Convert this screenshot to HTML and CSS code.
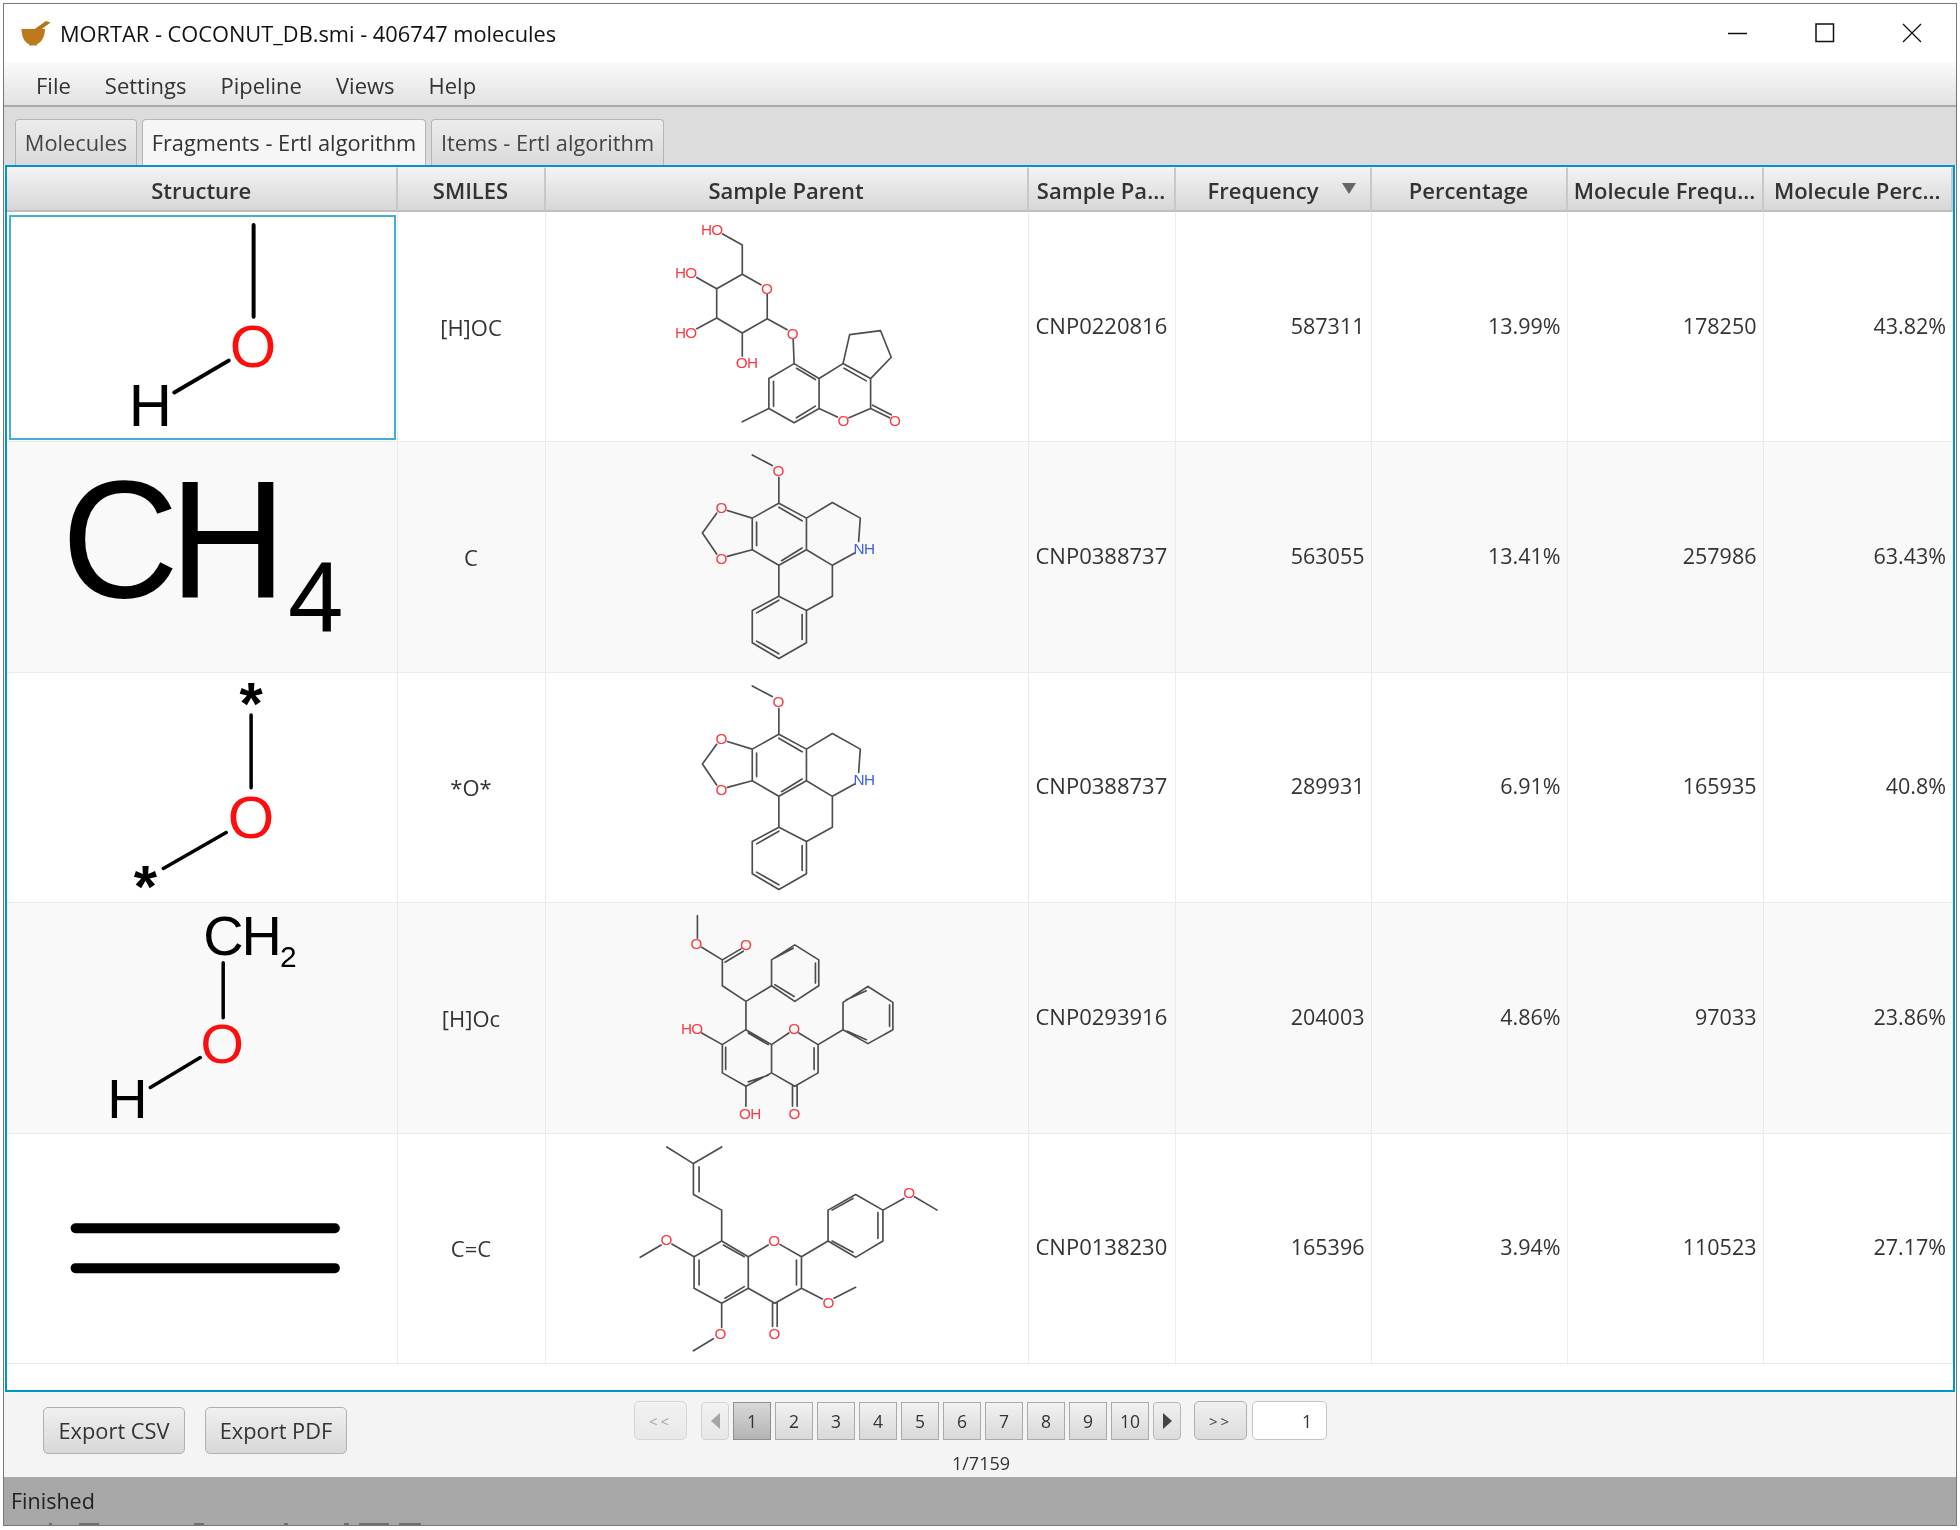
FILE: index.html
```html
<!DOCTYPE html>
<html lang="en">
<head>
<meta charset="utf-8">
<title>MORTAR</title>
<link rel="stylesheet" href="styles.css">
</head>
<body>
<div class="window">
  <header class="titlebar">
    <svg class="appicon" width="30" height="26" viewBox="0 0 30 26"><path d="M0.500 9 H24 C24 17 20 23 16 24 L16 25.500 H8 V24 C4 23 0.500 17 0.500 9Z" fill="#bd7a1c"/><path d="M13 9.500 L25 1 L29.500 2.500 L20 9.500Z" fill="#b3741a"/></svg>
    <span class="apptitle">MORTAR - COCONUT_DB.smi - 406747 molecules</span>
    <div class="winbtns">
      <svg width="20" height="20" viewBox="0 0 20 20"><path d="M0 10.500H19" stroke="#111" stroke-width="1.500"/></svg>
      <svg width="20" height="20" viewBox="0 0 20 20"><rect x="1" y="1" width="17.500" height="17.500" fill="none" stroke="#111" stroke-width="1.500"/></svg>
      <svg width="20" height="20" viewBox="0 0 20 20"><path d="M1 1L19 19M19 1L1 19" stroke="#111" stroke-width="1.300"/></svg>
    </div>
  </header>
  <nav class="menubar"><span>File</span><span>Settings</span><span>Pipeline</span><span>Views</span><span>Help</span></nav>
  <div class="tabbar">
    <div class="tab t1">Molecules</div>
    <div class="tab tab-on t2">Fragments - Ertl algorithm</div>
    <div class="tab t3">Items - Ertl algorithm</div>
  </div>
  <main class="tableframe">
    <div class="row head">
      <div class="th">Structure</div><div class="th">SMILES</div><div class="th">Sample Parent</div><div class="th">Sample Pa...</div>
      <div class="th freq"><span>Frequency</span><i class="sort"></i></div><div class="th">Percentage</div><div class="th">Molecule Frequ...</div><div class="th">Molecule Perc...</div>
    </div>

    <div class="row body">
      <div class="td pic selected">
        <svg class="mol" viewBox="7 212 389 230">
          <path class="b4" d="M253.500 225V317M174 393L228.500 361"/>
          <text class="red" x="253" y="367" font-size="60" text-anchor="middle">O</text>
          <text x="150" y="427" font-size="60" text-anchor="middle">H</text>
        </svg>
      </div>
      <div class="td smi">[H]OC</div>
      <div class="td pic">
        <svg class="mol thin" viewBox="-228 6 1449 690">
          <path class="bz" d="M303 72L362 105V193L418 225M437 254V327L362 370L285 325V237L362 193M285 237L225 203M285 325L225 357M362 370V440M437 327L497 360M515 388L518 462L593 507V597L518 640L442 597V507L518 462M525 476L582 510M582 590L525 625M456 515V590M593 507L665 462L748 507V597L683 625M648 623L593 597M668 476L735 514M665 462L685 375L778 363L810 443L748 507M748 597L805 625M754 587L810 616M442 597L362 637"/>
          <text class="lab" x="270" y="74">HO</text><text class="lab" x="192" y="206">HO</text><text class="lab" x="435" y="253">O</text><text class="lab" x="192" y="384">HO</text><text class="lab" x="375" y="474">OH</text><text class="lab" x="513" y="387">O</text><text class="lab" x="665" y="651">O</text><text class="lab" x="820" y="651">O</text>
        </svg>
      </div>
      <div class="td id">CNP0220816</div><div class="td num">587311</div><div class="td num">13.99%</div><div class="td num">178250</div><div class="td num">43.82%</div>
    </div>

    <div class="row body alt">
      <div class="td pic">
        <svg class="mol" viewBox="7 442 389 230">
          <text class="ch4" transform="translate(61 597.500) scale(.97 1)">CH</text>
          <text class="ch4sub" x="288" y="632.500">4</text>
        </svg>
      </div>
      <div class="td smi">C</div>
      <div class="td pic">
        <svg class="mol thin" viewBox="-348 -9 1449 690">
          <path class="bz" d="M272 30L332 62M352 97V175L435 220V315L352 362L272 315V220L352 175M352 187L422 228M285 232V303M422 310L360 348M197 197L272 220M197 335L272 315M165 205L122 265L165 328M435 220L513 173L597 220L592 290M580 325L513 362L435 315M513 362V455L435 498M352 362V455L435 498V595L352 642L272 595V498L352 455M352 467L285 505M285 590L352 628M422 510V585"/>
          <text class="lab" x="350" y="94">O</text><text class="lab" x="178" y="206">O</text><text class="lab" x="178" y="359">O</text><text class="lab blue" x="608" y="328">NH</text>
        </svg>
      </div>
      <div class="td id">CNP0388737</div><div class="td num">563055</div><div class="td num">13.41%</div><div class="td num">257986</div><div class="td num">63.43%</div>
    </div>

    <div class="row body">
      <div class="td pic">
        <svg class="mol" viewBox="7 673 389 230">
          <path class="b3" d="M251 715V788M163 869L226 833"/>
          <text class="star" x="251" y="724" text-anchor="middle">*</text>
          <text class="star" x="145" y="908" text-anchor="middle">*</text>
          <text class="red" x="251" y="838" font-size="60" text-anchor="middle">O</text>
        </svg>
      </div>
      <div class="td smi">*O*</div>
      <div class="td pic">
        <svg class="mol thin" viewBox="-348 -9 1449 690">
          <path class="bz" d="M272 30L332 62M352 97V175L435 220V315L352 362L272 315V220L352 175M352 187L422 228M285 232V303M422 310L360 348M197 197L272 220M197 335L272 315M165 205L122 265L165 328M435 220L513 173L597 220L592 290M580 325L513 362L435 315M513 362V455L435 498M352 362V455L435 498V595L352 642L272 595V498L352 455M352 467L285 505M285 590L352 628M422 510V585"/>
          <text class="lab" x="350" y="94">O</text><text class="lab" x="178" y="206">O</text><text class="lab" x="178" y="359">O</text><text class="lab blue" x="608" y="328">NH</text>
        </svg>
      </div>
      <div class="td id">CNP0388737</div><div class="td num">289931</div><div class="td num">6.91%</div><div class="td num">165935</div><div class="td num">40.8%</div>
    </div>

    <div class="row body alt">
      <div class="td pic">
        <svg class="mol" viewBox="7 903 389 230">
          <path class="b3" d="M223 963V1018M150 1088L200 1058"/>
          <text class="ch2" x="203" y="955" font-size="56">CH</text>
          <text x="280" y="967" font-size="30">2</text>
          <text class="red" x="222" y="1063" font-size="56" text-anchor="middle">O</text>
          <text x="127" y="1119" font-size="56" text-anchor="middle">H</text>
        </svg>
      </div>
      <div class="td smi">[H]Oc</div>
      <div class="td pic">
        <svg class="mol thin" viewBox="-288 -6 1449 690">
          <path class="bz" d="M167 32V100M180 127L242 165L298 132M250 172L305 139M242 165V243L313 290L390 243V165L460 120L532 165V243L460 290L390 243M398 160L455 130M522 175V235M400 240L458 275M313 290V375L390 420V505L313 545L242 505V420L313 375M180 385L242 420M320 385L380 420M390 420L442 385M472 385L530 420V505L460 545L390 505M518 430V495M453 545V605M467 545V605M380 512L320 532M252 428V495M313 545V605M530 420L605 375V293L680 245L755 293V375L680 417L605 375M615 285L675 258M745 300V365M618 380L675 405"/>
          <text class="lab" x="163" y="133">O</text><text class="lab" x="312" y="134">O</text><text class="lab" x="150" y="388">HO</text><text class="lab" x="457" y="389">O</text><text class="lab" x="458" y="643">O</text><text class="lab" x="325" y="643">OH</text>
        </svg>
      </div>
      <div class="td id">CNP0293916</div><div class="td num">204003</div><div class="td num">4.86%</div><div class="td num">97033</div><div class="td num">23.86%</div>
    </div>

    <div class="row body">
      <div class="td pic">
        <svg class="mol" viewBox="7 1134 389 230">
          <path class="b10" d="M75 1228.500H335M75 1268.500H335"/>
        </svg>
      </div>
      <div class="td smi">C=C</div>
      <div class="td pic">
        <svg class="mol thin" viewBox="-198 -4 1449 690">
          <path class="bz" d="M165 35L245 85L330 35M245 85V178L330 225V318L410 365V460L330 505L247 460V365L330 318M262 95V170M335 330L398 365M410 365L470 330M505 328L570 365V460L490 505L410 460M555 375V450M398 455L340 490M262 375V450M247 365L180 327M148 330L85 367M330 505V578M305 612L245 648M483 505V575M497 505V575M570 460L633 492M668 490L733 457M570 365L650 318V225L733 178L815 225V318L733 367L650 318M662 225L725 190M800 232V310M662 318L725 352M815 225L878 190M910 185L978 225"/>
          <text class="lab" x="487" y="333">O</text><text class="lab" x="163" y="331">O</text><text class="lab" x="325" y="613">O</text><text class="lab" x="488" y="613">O</text><text class="lab" x="650" y="518">O</text><text class="lab" x="893" y="188">O</text>
        </svg>
      </div>
      <div class="td id">CNP0138230</div><div class="td num">165396</div><div class="td num">3.94%</div><div class="td num">110523</div><div class="td num">27.17%</div>
    </div>
  </main>
  <section class="bottom">
    <div class="exports"><button class="btn">Export CSV</button><button class="btn">Export PDF</button></div>
    <div class="pager-wrap">
      <div class="pager">
        <button class="nav nav-off">&lt;&lt;</button>
        <div class="pages">
          <button class="arrow arrow-off"><i class="tri-l"></i></button>
          <button class="pg pg-on">1</button><button class="pg">2</button><button class="pg">3</button><button class="pg">4</button><button class="pg">5</button><button class="pg">6</button><button class="pg">7</button><button class="pg">8</button><button class="pg">9</button><button class="pg">10</button>
          <button class="arrow"><i class="tri-r"></i></button>
        </div>
        <button class="nav">&gt;&gt;</button>
        <div class="pageinput">1</div>
      </div>
      <div class="count">1/7159</div>
    </div>
  </section>
  <footer class="status">
    <span>Finished</span>
    <svg class="cliptext" width="500" height="2" viewBox="0 0 500 2"><path d="M45 1h3M75 1h20M190 1h10M280 1h4M340 1h5M355 1h30M395 1h22" stroke="#5c5c5c" stroke-width="1.500"/></svg>
  </footer>
</div>
</body>
</html>
```
FILE: styles.css
```css
* { box-sizing: border-box; }
html, body { margin: 0; padding: 0; background: #fff; }
body {
  width: 1960px;
  height: 1530px;
  padding: 3px 3px 4px 3px;
  font-family: "Open Sans", "Noto Sans", sans-serif;
  color: #333;
}
.window {
  height: 100%;
  display: flex;
  flex-direction: column;
  border: 1.5px solid #777;
  border-bottom-width: 1px;
  background: #f4f4f4;
  filter: blur(0.4px);
}
.titlebar {
  flex: 0 0 58px;
  background: #fff;
  display: flex;
  align-items: center;
  padding-left: 17px;
  color: #111;
}
.appicon { margin-right: 9px; }
.apptitle { font-size: 21.800px; }
.winbtns { margin-left: auto; display: flex; gap: 67px; padding-right: 34px; }
.menubar {
  flex: 0 0 45px;
  display: flex;
  align-items: center;
  gap: 34px;
  padding: 3px 0 0 32px;
  font-size: 22px;
  color: #333;
  background: linear-gradient(#fafafa, #e2e2e2);
  border-bottom: 2px solid #aaa;
}
.tabbar {
  flex: 0 0 58px;
  background: #dcdcdc;
  display: flex;
  align-items: flex-end;
  padding-left: 11px;
  gap: 5px;
}
.tab {
  height: 46px;
  display: flex;
  align-items: center;
  justify-content: center;
  font-size: 21.800px;
  color: #444;
  background: linear-gradient(#ececec, #dadada);
  border: 1px solid #b5b5b5;
  border-bottom: 0;
  border-radius: 4px 4px 0 0;
}
.t1 { width: 122px; }
.t2 { width: 284px; }
.t3 { width: 233px; }
.tab-on { background: #f6f6f6; color: #333; }
.tableframe {
  flex: 0 0 1227px;
  margin: 0 1px;
  border: 2px solid #0096c9;
  border-bottom-width: 2.500px;
  background: #fff;
  display: flex;
  flex-direction: column;
}
.row {
  display: grid;
  grid-template-columns: 390.500px 148px 483px 147px 196px 196px 196px 1fr;
  grid-template-rows: minmax(0, 1fr);
  min-height: 0;
}
.head { flex: 0 0 45px; }
.body { flex: 0 0 230.400px; height: 230.400px; }
.alt { background: #f9f9f9; }
.th {
  display: flex;
  align-items: center;
  justify-content: center;
  padding-top: 2px;
  font-size: 22px;
  font-weight: 600;
  color: #333;
  white-space: nowrap;
  overflow: hidden;
  background: linear-gradient(#f3f3f3, #d7d7d7);
  border-right: 2px solid #c8c8c8;
  border-bottom: 2px solid #bdbdbd;
  border-top: 1px solid #fafafa;
}
.freq { justify-content: flex-start; padding-left: 32px; gap: 24px; }
.sort {
  width: 0;
  height: 0;
  border-left: 7px solid transparent;
  border-right: 7px solid transparent;
  border-top: 11px solid #666;
  margin-top: -4px;
}
.td {
  display: flex;
  align-items: center;
  font-size: 21.500px;
  color: #333;
  border-right: 1.500px solid #ebebeb;
  border-bottom: 1.500px solid #ebebeb;
  min-width: 0;
  min-height: 0;
  padding-bottom: 3px;
  white-space: nowrap;
}
.pic { padding: 0; position: relative; }
.mol { display: block; width: 100%; height: 100%; overflow: visible; font-family: "Liberation Sans", Arial, sans-serif; fill: #000; }
.selected::after {
  content: "";
  position: absolute;
  inset: 3px 1px 1px 2px;
  border: 2px solid #45aed6;
  pointer-events: none;
}
.smi { justify-content: center; padding: 0; font-size: 22px; }
.id { padding: 0 0 4px 7px; font-size: 22px; }
.num { justify-content: flex-end; padding-right: 6px; }
.red { fill: #ff0d0d; }
.b4, .b3, .b10, .bz { fill: none; stroke-linecap: round; }
.b4 { stroke: #000; stroke-width: 4; }
.b3 { stroke: #000; stroke-width: 3.500; }
.b10 { stroke: #000; stroke-width: 10; }
.bz { stroke: #4d4d4d; stroke-width: 5; stroke-linejoin: round; }
.thin { filter: blur(0.3px); }
.lab { fill: #fb3b45; font-size: 46px; letter-spacing: -2px; text-anchor: middle; }
.blue { fill: #3f5fe8; }
.ch4 { font-size: 168px; letter-spacing: -10px; }
.ch4sub { font-size: 100px; }
.ch2 { letter-spacing: -2px; }
.star { font-size: 60px; font-weight: 700; }
.bottom {
  flex: 1;
  position: relative;
  display: flex;
  background: #f4f4f4;
}
.exports { display: flex; gap: 20px; padding: 15px 0 0 39px; align-items: flex-start; }
.btn {
  height: 47px;
  width: 142px;
  font-family: inherit;
  font-size: 21.800px;
  color: #333;
  padding: 0;
  background: linear-gradient(#f0f0f0, #d8d8d8);
  border: 1.500px solid #b0b0b0;
  border-radius: 5px;
}
.pager-wrap { position: absolute; left: 630px; top: 9px; width: 700px; }
.pager { display: flex; align-items: flex-start; }
.nav {
  width: 53px;
  height: 39px;
  font-family: inherit;
  font-size: 15px;
  letter-spacing: 3px;
  color: #444;
  padding: 0;
  background: linear-gradient(#f0f0f0, #dcdcdc);
  border: 1.500px solid #b0b0b0;
  border-radius: 5px;
}
.nav-off { opacity: .45; margin-right: 14px; }
.pages { display: flex; gap: 4px; margin-right: 13px; margin-top: 1px; }
.pg {
  width: 38px;
  height: 38px;
  font-family: inherit;
  font-size: 17.500px;
  color: #333;
  padding: 0;
  background: linear-gradient(#f2f2f2, #d8d8d8);
  border: 1.500px solid #aaa;
}
.pg-on { background: linear-gradient(#d8d8d8, #b4b4b4); border-color: #8f8f8f; }
.arrow {
  width: 28px;
  height: 38px;
  padding: 0;
  display: flex;
  align-items: center;
  justify-content: center;
  background: linear-gradient(#f0f0f0, #dcdcdc);
  border: 1.500px solid #b8b8b8;
  border-radius: 4px;
}
.arrow-off { opacity: .55; }
.tri-l, .tri-r { width: 0; height: 0; border-top: 8px solid transparent; border-bottom: 8px solid transparent; }
.tri-l { border-right: 9px solid #666; }
.tri-r { border-left: 9px solid #444; }
.pageinput {
  width: 75px;
  height: 39px;
  margin-left: 5px;
  display: flex;
  align-items: center;
  justify-content: flex-end;
  padding-right: 14px;
  font-size: 17.500px;
  background: #fff;
  border: 1.500px solid #c4c4c4;
  border-radius: 5px;
}
.count { position: absolute; left: 0; width: 694px; top: 50px; text-align: center; font-size: 18px; color: #333; }
.status {
  flex: 0 0 48px;
  position: relative;
  background: #a8a8a8;
  display: flex;
  align-items: center;
  padding: 0 0 2px 7px;
  font-size: 21.500px;
  color: #222;
}
.cliptext { position: absolute; left: 0; bottom: 0; display: block; }
```
